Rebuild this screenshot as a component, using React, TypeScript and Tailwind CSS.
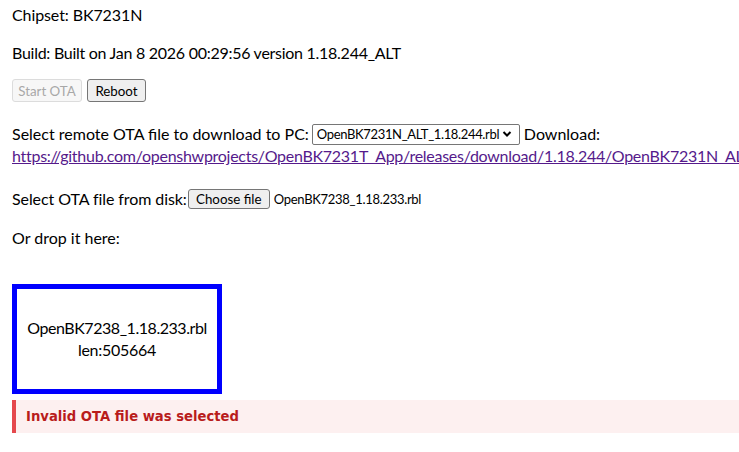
import React from "react";

export default function App() {
  const font = { fontFamily: "Lato, 'Open Sans', sans-serif" };
  return (
    <div className="w-[739px] h-[452px] overflow-hidden bg-white text-[16px] leading-[22px] tracking-[-0.27px] text-black" style={font}>
      <div className="px-3 pt-[4px]">
        <div className="h-[22px] tracking-[-0.1px]">Chipset: BK7231N</div>
        <div className="mt-[16px] h-[22px]">Build: Built on Jan 8 2026 00:29:56 version 1.18.244_ALT</div>
        <div className="mt-[15px] flex h-[23px] items-center gap-[5px] text-[13.33px] tracking-normal">
          <div className="flex h-[23px] w-[70px] items-center justify-center rounded-[3px] border border-[#dcdcdc] bg-[#f7f7f7] text-[#a8a8a8]">
            Start OTA
          </div>
          <div className="flex h-[23px] w-[59px] items-center justify-center rounded-[3px] border border-[#767676] bg-[#efefef] text-black">
            Reboot
          </div>
        </div>
        <div className="mt-[21px] flex h-[22px] items-center whitespace-nowrap">
          <span className="tracking-normal">Select remote OTA file to download to PC:</span>
          <div className="ml-[3px] flex h-[21px] w-[208px] shrink-0 items-center justify-between rounded-[2px] border border-[#767676] bg-white pl-[4px] pr-[7px] text-[13px] tracking-[-0.35px]">
            <span>OpenBK7231N_ALT_1.18.244.rbl</span>
            <svg width="10" height="8" viewBox="0 0 10 8" className="shrink-0">
              <path d="M1.5 2 L5 5.5 L8.5 2" stroke="black" strokeWidth="2" fill="none" />
            </svg>
          </div>
          <span className="ml-[4px] tracking-normal">Download:</span>
        </div>
        <div className="h-[22px] whitespace-nowrap">
          <a className="text-[#551a8b] underline" href="#">
            https://github.com/openshwprojects/OpenBK7231T_App/releases/download/1.18.244/OpenBK7231N_ALT_1.18.244.rbl
          </a>
        </div>
        <div className="mt-[21px] flex h-[22px] items-center whitespace-nowrap">
          <span className="tracking-[-0.08px]">Select OTA file from disk:</span>
          <div className="ml-[1px] flex h-[20px] w-[82px] items-center justify-center rounded-[3px] border border-[#767676] bg-[#efefef] text-[13.33px] tracking-normal">
            Choose file
          </div>
          <span className="ml-[4px] text-[13px] tracking-[-0.3px]">OpenBK7238_1.18.233.rbl</span>
        </div>
        <div className="mt-[17px] h-[22px] tracking-normal">Or drop it here:</div>
        <div className="mt-[35px] flex h-[110px] w-[210px] flex-col items-center justify-center border-[5px] border-[#0000ff] text-center">
          <div className="tracking-[-0.45px]">OpenBK7238_1.18.233.rbl</div>
          <div>len:505664</div>
        </div>
      </div>
      <div className="ml-3 mt-[6px] flex h-[33px] items-center border-l-[4px] border-[#e5484d] bg-[#fdf0f0] pl-[10px]">
        <span className="font-bold tracking-normal text-[#b91c1c]" style={{ fontFamily: "'DejaVu Sans', Verdana, sans-serif", fontSize: "13.2px" }}>
          Invalid OTA file was selected
        </span>
      </div>
    </div>
  );
}
